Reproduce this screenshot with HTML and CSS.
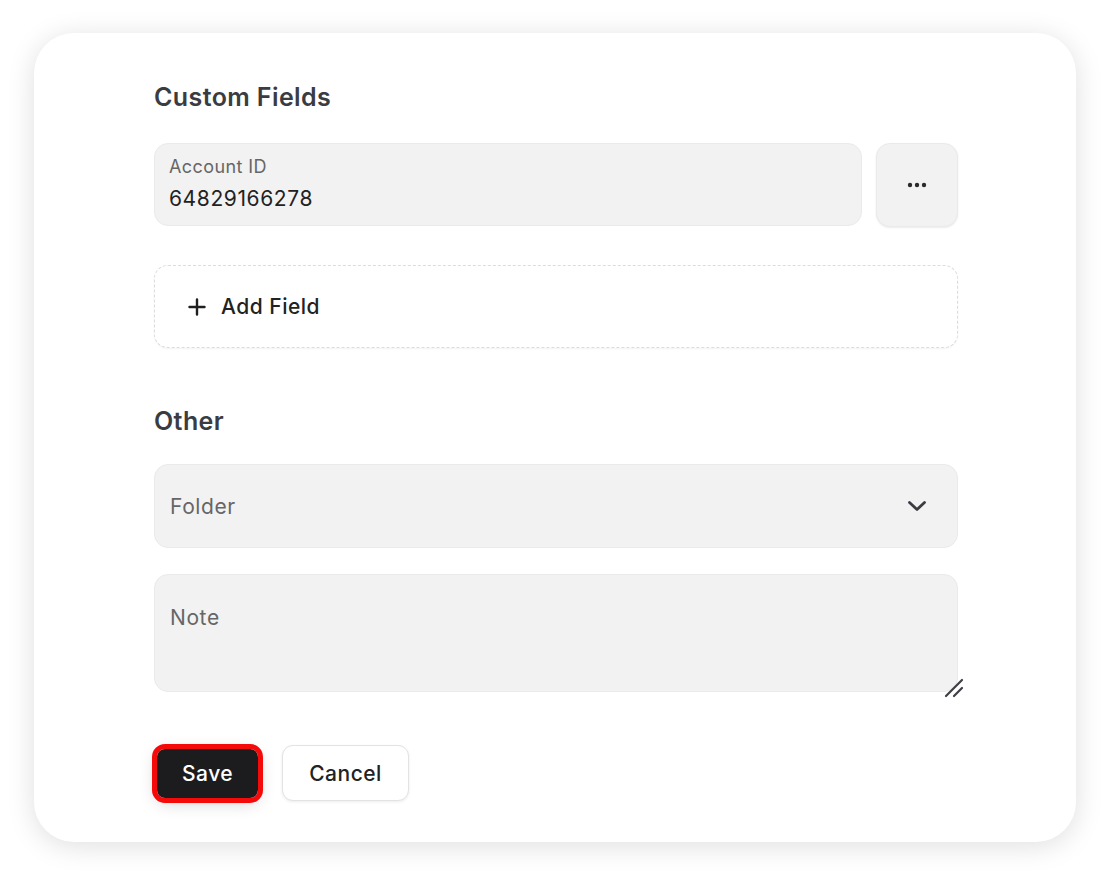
FILE: index.html
```html
<!DOCTYPE html>
<html lang="en">
<head>
    <meta charset="UTF-8">
    <meta name="viewport" content="width=device-width, initial-scale=1.0">
    <title>Edit Item</title>
    <link rel="stylesheet" href="styles.css">
</head>
<body>
    <section class="card">
        <h2 class="section-title">Custom Fields</h2>
        <div class="field-row">
            <label class="field">
                <span class="field-label">Account ID</span>
                <input class="field-value" type="text" value="64829166278" readonly>
            </label>
            <button class="more-btn" type="button" aria-label="More">
                <svg width="22" height="6" viewBox="0 0 22 6">
                    <circle cx="4" cy="3" r="2.2" fill="#2b2b2e"/>
                    <circle cx="11" cy="3" r="2.2" fill="#2b2b2e"/>
                    <circle cx="18" cy="3" r="2.2" fill="#2b2b2e"/>
                </svg>
            </button>
        </div>
        <button class="add-field" type="button">
            <svg width="18" height="18" viewBox="0 0 18 18">
                <path d="M9 1.5v15M1.5 9h15" stroke="#1f1f22" stroke-width="2.4" stroke-linecap="round"/>
            </svg>
            <span>Add Field</span>
        </button>

        <h2 class="section-title other">Other</h2>
        <div class="select">
            <span>Folder</span>
            <svg width="20" height="12" viewBox="0 0 20 12">
                <path d="M2.5 2.5l7.5 7 7.5-7" fill="none" stroke="#3a3c42" stroke-width="2.8" stroke-linecap="round" stroke-linejoin="round"/>
            </svg>
        </div>
        <div class="note-wrap">
            <textarea class="note" placeholder="Note"></textarea>
            <!-- resize grip -->
            <svg class="grip" width="20" height="20" viewBox="0 0 20 20">
                <path d="M2 18L18 2M10 18l8-8" stroke="#3d3f45" stroke-width="2.2" stroke-linecap="round"/>
            </svg>
        </div>

        <div class="actions">
            <button class="btn btn-save" type="button">Save</button>
            <button class="btn btn-cancel" type="button">Cancel</button>
        </div>
    </section>
</body>
</html>
```

FILE: styles.css
```css
body {
    margin: 0;
    background-color: #fff;
    font-family: Inter, "Noto Sans", "Liberation Sans", sans-serif;
}

.card {
    margin: 33px 34px;
    padding: 48px 118px 41px 120px;
    background-color: #fff;
    border-radius: 40px;
    box-shadow: 0 4px 28px rgba(0, 0, 0, 0.13);
}

.section-title {
    margin: 0 0 30px;
    font-size: 25px;
    line-height: 32px;
    font-weight: 600;
    letter-spacing: 0.4px;
    color: #3a3c42;
}

.section-title.other {
    margin-top: 57px;
    margin-bottom: 27px;
}

/* custom field row */
.field-row {
    display: flex;
    gap: 14px;
}

.field {
    flex: 1;
    display: flex;
    flex-direction: column;
    justify-content: center;
    gap: 7px;
    height: 83px;
    box-sizing: border-box;
    padding: 0 14px 0 14px;
    background-color: #f2f2f2;
    border: 1px solid #eaeaea;
    border-radius: 14px;
}

.field-label {
    font-size: 18px;
    line-height: 22px;
    letter-spacing: 0.4px;
    color: #666;
}

.field-value {
    margin: 0;
    padding: 0;
    border: none;
    background: transparent;
    font-family: inherit;
    font-size: 21px;
    line-height: 28px;
    letter-spacing: 0.6px;
    color: #222;
    outline: none;
}

.more-btn {
    width: 82px;
    height: 84px;
    display: flex;
    align-items: center;
    justify-content: center;
    padding: 0;
    background-color: #f2f2f2;
    border: 1px solid #eaeaea;
    border-radius: 14px;
    box-shadow: 0 1px 2px rgba(0, 0, 0, 0.08);
}

.add-field {
    display: flex;
    align-items: center;
    gap: 15px;
    width: 100%;
    height: 83px;
    margin-top: 38px;
    padding: 0 33px;
    background-color: #fff;
    border: 1.5px dashed #dcdcdc;
    border-radius: 14px;
    box-shadow: 0 1px 2px rgba(0, 0, 0, 0.05);
    font-family: inherit;
    font-size: 21px;
    font-weight: 500;
    letter-spacing: 0.5px;
    color: #222;
}

/* other */
.select {
    display: flex;
    align-items: center;
    justify-content: space-between;
    height: 84px;
    box-sizing: border-box;
    padding: 0 30px 0 15px;
    background-color: #f2f2f2;
    border: 1px solid #eaeaea;
    border-radius: 14px;
    font-size: 21px;
    letter-spacing: 0.6px;
    color: #666;
}

.note-wrap {
    position: relative;
    margin-top: 26px;
}

.note {
    display: block;
    width: 100%;
    height: 118px;
    box-sizing: border-box;
    padding: 29px 15px;
    background-color: #f2f2f2;
    border: 1px solid #eaeaea;
    border-radius: 14px;
    font-family: inherit;
    font-size: 21px;
    line-height: 28px;
    letter-spacing: 0.6px;
    color: #222;
    resize: none;
    outline: none;
}

.note::placeholder {
    color: #666;
}

.grip {
    position: absolute;
    right: -6px;
    bottom: -6px;
}

/* buttons */
.actions {
    display: flex;
    align-items: center;
    gap: 24px;
    margin-top: 53px;
    padding-left: 3px;
}

.btn {
    font-family: inherit;
    font-size: 21px;
    font-weight: 500;
    letter-spacing: 0.5px;
    cursor: pointer;
}

.btn-save {
    height: 49px;
    padding: 0 25px;
    color: #fff;
    background-color: #1c1c1e;
    border: none;
    border-radius: 8px;
    outline: 5px solid #f50a0a;
    box-shadow: 0 4px 18px rgba(0, 0, 0, 0.2);
}

.btn-cancel {
    height: 56px;
    padding: 0 26px;
    color: #222;
    background-color: #fff;
    border: 1px solid #e3e3e3;
    border-radius: 11px;
    box-shadow: 0 1px 3px rgba(0, 0, 0, 0.08);
}
```
